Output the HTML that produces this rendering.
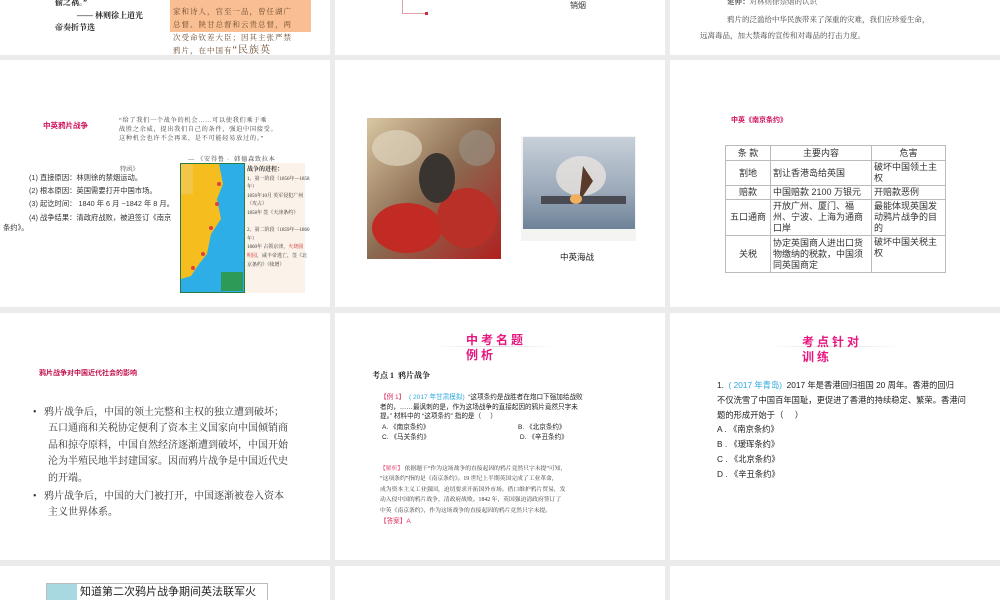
<!DOCTYPE html>
<html><head><meta charset="utf-8">
<style>
*{margin:0;padding:0;box-sizing:border-box}
body{width:1000px;height:600px;overflow:hidden;background:#ebebeb;position:relative;font-family:"Liberation Sans","Noto Sans CJK SC",sans-serif;color:#222}
.s{position:absolute;background:#fff;overflow:hidden}
.a{position:absolute;white-space:nowrap}
.serif{font-family:"Liberation Serif","Noto Serif CJK SC",serif}
.pk{color:#d0105a;font-weight:bold}
.mg{color:#e8167f;font-weight:bold;letter-spacing:3px}
table{border-collapse:collapse;position:absolute;font-size:9px;color:#333}
td{border:1px solid #bbb;padding:1px 2px;line-height:11px;vertical-align:middle}
</style></head><body>

<!-- Row 1 -->
<div class="s" style="left:0;top:0;width:330px;height:55px">
  <div class="a serif" style="left:55px;top:-3px;font-size:8px;font-weight:bold">偷之祸。”</div>
  <div class="a serif" style="left:77px;top:10px;font-size:8px;font-weight:bold">—— 林则徐上道光</div>
  <div class="a serif" style="left:55px;top:22px;font-size:8px;font-weight:bold">帝奏折节选</div>
  <div class="a" style="left:170px;top:0;width:141px;height:32px;background:#f9bf92"></div>
  <div class="a serif" style="left:173px;top:5px;font-size:7.5px;line-height:13px;color:#6b4a2e;letter-spacing:1px">家和诗人，官至一品，曾任湖广<br>总督、陕甘总督和云贵总督，两<br>次受命钦差大臣；因其主张严禁<br>鸦片，在中国有<span style="font-size:10px">“民族英</span></div>
</div>
<div class="s" style="left:335px;top:0;width:330px;height:55px">
  <div class="a" style="left:67px;top:0;width:1px;height:13px;background:#e6a0a8"></div>
  <div class="a" style="left:67px;top:13px;width:25px;height:1px;background:#e6a0a8"></div>
  <div class="a" style="left:90px;top:12px;width:3px;height:3px;background:#c03040"></div>
  <div class="a" style="left:235px;top:0;font-size:8px;color:#333">销烟</div>
</div>
<div class="s" style="left:670px;top:0;width:330px;height:55px">
  <div class="a serif" style="left:57px;top:-4px;font-size:7.5px;color:#555"><b>延伸：</b>对林则徐禁烟的认识</div>
  <div class="a serif" style="left:57px;top:14px;font-size:7.5px;color:#444">鸦片的泛滥给中华民族带来了深重的灾难，我们应珍爱生命，</div>
  <div class="a serif" style="left:30px;top:30px;font-size:7.5px;color:#444">远离毒品，加大禁毒的宣传和对毒品的打击力度。</div>
</div>

<!-- Row 2 -->
<div class="s" style="left:0;top:60px;width:330px;height:247px">
  <div class="a pk" style="left:43px;top:60px;font-size:7.5px">中英鸦片战争</div>
  <div class="a serif" style="left:119px;top:56px;font-size:6.2px;line-height:9px;color:#444;letter-spacing:.7px">“给了我们一个战争的机会……可以使我们乘于乘<br>战胜之余威，提出我们自己的条件，强迫中国接受。<br>这种机会也许不会再来，是不可能轻易放过的。”</div>
  <div class="a serif" style="left:188px;top:94px;font-size:6.2px;color:#444;letter-spacing:.7px">— 《安得鲁 · &nbsp;韩德森致拉本</div>
  <div class="a serif" style="left:120px;top:104px;font-size:6.2px;color:#444">特函》</div>
  <div class="a" style="left:29px;top:111px;font-size:7.3px;line-height:13.2px;color:#333">(1) 直接原因：林则徐的禁烟运动。<br>(2) 根本原因：英国需要打开中国市场。<br>(3) 起讫时间：&nbsp;1840 年 6 月 ~1842 年 8 月。<br>(4) 战争结果：清政府战败，被迫签订《南京</div>
  <div class="a" style="left:3px;top:163px;font-size:7.3px;color:#333">条约》。</div>
  <div class="a" style="left:180px;top:103px;width:65px;height:130px;background:#2eaee6;border:1px solid #2a7a40"></div>
  <svg class="a" style="left:181px;top:104px" width="63" height="128"><path d="M0 0H38L42 20L36 35L40 55L30 70L26 90L18 100L10 112L0 115Z" fill="#f5bd1e"/><rect x="0" y="0" width="12" height="30" fill="#f3c64a"/><rect x="40" y="108" width="22" height="19" fill="#2e9a58"/><g fill="#e04040"><circle cx="38" cy="20" r="2"/><circle cx="36" cy="40" r="2"/><circle cx="30" cy="64" r="2"/><circle cx="22" cy="90" r="2"/><circle cx="12" cy="104" r="2"/></g></svg>
  <div class="a" style="left:245px;top:103px;width:60px;height:130px;background:#fbf3ea"></div>
  <div class="a serif" style="left:247px;top:106px;font-size:5px;line-height:8.6px;color:#333"><b style="font-size:6px">战争的进程：</b><br>1、第一阶段（1856年—1858<br>年）<br>1856年10月 英军侵犯广州<br>（攻占）<br>1858年 签《天津条约》<br><br>2、第二阶段（1859年—1860<br>年）<br>1860年 占领京津，<span style="color:#d02020">火烧圆</span><br><span style="color:#d02020">明园</span>，咸丰帝逃亡，签《北<br>京条约》（续增）</div>
</div>
<div class="s" style="left:335px;top:60px;width:330px;height:247px">
  <svg class="a" style="left:32px;top:58px" width="134" height="141"><defs><linearGradient id="g1" x1="0" y1="0" x2="1" y2="1"><stop offset="0" stop-color="#d9c7a2"/><stop offset=".5" stop-color="#8a6a50"/><stop offset="1" stop-color="#b02020"/></linearGradient></defs><rect width="134" height="141" fill="url(#g1)"/><ellipse cx="40" cy="110" rx="35" ry="25" fill="#c22a24"/><ellipse cx="100" cy="100" rx="30" ry="30" fill="#b83028"/><ellipse cx="70" cy="60" rx="18" ry="25" fill="#3a3430"/><ellipse cx="30" cy="30" rx="25" ry="18" fill="#e0d6c0" opacity=".7"/><ellipse cx="110" cy="30" rx="18" ry="18" fill="#9a8e80" opacity=".7"/></svg>
  <svg class="a" style="left:186px;top:76px" width="115" height="105"><defs><linearGradient id="g2" x1="0" y1="0" x2="0" y2="1"><stop offset="0" stop-color="#c8d0da"/><stop offset=".6" stop-color="#9aa8b8"/><stop offset="1" stop-color="#6d8298"/></linearGradient></defs><rect width="115" height="105" fill="#f4f4f2"/><rect x="2" y="1" width="112" height="92" fill="url(#g2)"/><ellipse cx="60" cy="40" rx="25" ry="20" fill="#e8e4de" opacity=".8"/><path d="M62 30L72 45L58 66Z" fill="#5a3a2a"/><rect x="20" y="60" width="85" height="8" fill="#4a4a52"/><ellipse cx="55" cy="63" rx="6" ry="5" fill="#f0b060"/></svg>
  <div class="a" style="left:225px;top:191px;font-size:8.5px;color:#222">中英海战</div>
</div>
<div class="s" style="left:670px;top:60px;width:330px;height:247px">
  <div class="a pk" style="left:61px;top:55px;font-size:7px">中英《南京条约》</div>
  <table style="left:55px;top:85px;width:221px">
    <tr style="height:15px"><td style="width:45px;text-align:center">条 款</td><td style="width:101px;text-align:center">主要内容</td><td style="text-align:center">危害</td></tr>
    <tr style="height:25px"><td style="text-align:center">割地</td><td>割让香港岛给英国</td><td>破坏中国领土主权</td></tr>
    <tr style="height:14px"><td style="text-align:center">赔款</td><td>中国赔款 2100 万银元</td><td>开赔款恶例</td></tr>
    <tr style="height:36px"><td style="text-align:center">五口通商</td><td>开放广州、厦门、福州、宁波、上海为通商口岸</td><td>最能体现英国发动鸦片战争的目的</td></tr>
    <tr style="height:37px"><td style="text-align:center">关税</td><td>协定英国商人进出口货物缴纳的税款，中国须同英国商定</td><td style="vertical-align:top">破坏中国关税主权</td></tr>
  </table>
</div>

<!-- Row 3 -->
<div class="s" style="left:0;top:313px;width:330px;height:247px">
  <div class="a pk" style="left:39px;top:55px;font-size:7px;color:#c0104a">鸦片战争对中国近代社会的影响</div>
  <div class="a serif" style="left:33px;top:92px;font-size:10px;line-height:16.4px;color:#333">•&nbsp;&nbsp; 鸦片战争后，中国的领土完整和主权的独立遭到破坏；<br>&nbsp;&nbsp;&nbsp;&nbsp;&nbsp; 五口通商和关税协定便利了资本主义国家向中国倾销商<br>&nbsp;&nbsp;&nbsp;&nbsp;&nbsp; 品和掠夺原料，中国自然经济逐渐遭到破坏，中国开始<br>&nbsp;&nbsp;&nbsp;&nbsp;&nbsp; 沦为半殖民地半封建国家。因而鸦片战争是中国近代史<br>&nbsp;&nbsp;&nbsp;&nbsp;&nbsp; 的开端。</div>
  <div class="a serif" style="left:33px;top:176px;font-size:10px;line-height:16.4px;color:#333">•&nbsp;&nbsp; 鸦片战争后，中国的大门被打开，中国逐渐被卷入资本<br>&nbsp;&nbsp;&nbsp;&nbsp;&nbsp; 主义世界体系。</div>
</div>
<div class="s" style="left:335px;top:313px;width:330px;height:247px">
  <div class="a" style="left:100px;top:33px;width:120px;height:1px;background:linear-gradient(90deg,#fff,#ddd,#fff)"></div>
  <div class="a mg" style="left:131px;top:18px;font-size:12px">中考名题</div>
  <div class="a mg" style="left:131px;top:33px;font-size:12px">例析</div>
  <div class="a serif" style="left:37px;top:57px;font-size:8px;font-weight:bold">考点 1 &nbsp;鸦片战争</div>
  <div class="a" style="left:45px;top:80px;font-size:6.6px;line-height:9.6px;color:#222"><span style="color:#e03060">【例 1】</span>&nbsp; <span style="color:#30a8e0">( 2017 年甘肃模拟)</span>&nbsp; “这项条约是战胜者在炮口下强加给战败<br>者的，……最讽刺的是，作为这场战争的直接起因的鸦片竟然只字未<br>提。” 材料中的 “这项条约” 指的是（&nbsp;&nbsp;&nbsp;&nbsp;&nbsp;）</div>
  <div class="a" style="left:47px;top:110px;font-size:6.6px;line-height:9.6px">A. 《南京条约》<br>C. 《马关条约》</div>
  <div class="a" style="left:183px;top:110px;font-size:6.6px;line-height:9.6px">B. 《北京条约》<br>&nbsp;D. 《辛丑条约》</div>
  <div class="a serif" style="left:45px;top:151px;font-size:5.8px;line-height:10.4px;color:#333"><span style="color:#e03060">【解析】</span> 依据题干“作为这场战争的直接起因的鸦片竟然只字未提”可知，<br>“这项条约”指的是《南京条约》。19 世纪上半期英国完成了工业革命，<br>成为资本主义工业强国，迫切要求开拓国外市场。借口维护鸦片贸易，发<br>动入侵中国的鸦片战争，清政府战败。1842 年，英国强迫清政府签订了<br>中英《南京条约》，作为这场战争的直接起因的鸦片竟然只字未提。</div>
  <div class="a" style="left:45px;top:202px;font-size:6.6px;color:#e03060">【答案】A</div>
</div>
<div class="s" style="left:670px;top:313px;width:330px;height:247px">
  <div class="a" style="left:100px;top:33px;width:130px;height:1px;background:linear-gradient(90deg,#fff,#ddd,#fff)"></div>
  <div class="a mg" style="left:132px;top:20px;font-size:12px">考点针对</div>
  <div class="a mg" style="left:132px;top:35px;font-size:12px">训练</div>
  <div class="a" style="left:47px;top:65px;font-size:8.3px;line-height:14.8px;color:#222">1.&nbsp; <span style="color:#30a8e0">( 2017 年青岛)</span>&nbsp; 2017 年是香港回归祖国 20 周年。香港的回归<br>不仅洗雪了中国百年国耻，更促进了香港的持续稳定、繁荣。香港问<br>题的形成开始于（&nbsp;&nbsp;&nbsp;&nbsp;&nbsp;）<br>A . 《南京条约》<br>B . 《瑷珲条约》<br>C . 《北京条约》<br>D . 《辛丑条约》</div>
</div>

<!-- Row 4 -->
<div class="s" style="left:0;top:566px;width:330px;height:34px">
  <div class="a" style="left:46px;top:17px;width:222px;height:20px;border:1px solid #bbb"></div>
  <div class="a" style="left:47px;top:18px;width:30px;height:20px;background:#a8d8e0"></div>
  <div class="a" style="left:80px;top:17px;font-size:11px;color:#222">知道第二次鸦片战争期间英法联军火</div>
</div>
<div class="s" style="left:335px;top:566px;width:330px;height:34px"></div>
<div class="s" style="left:670px;top:566px;width:330px;height:34px"></div>
</body></html>
